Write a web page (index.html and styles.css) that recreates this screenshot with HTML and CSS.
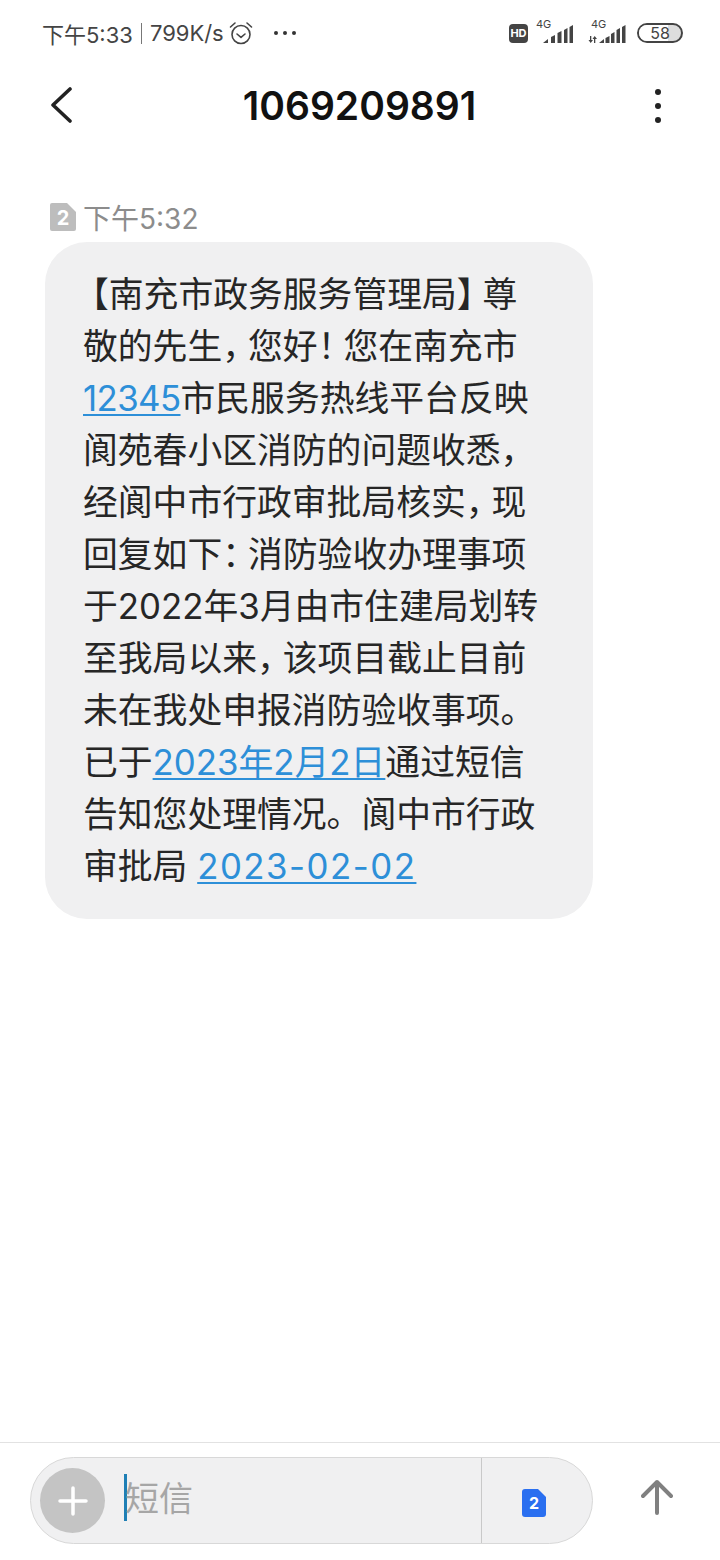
FILE: index.html
```html
<!DOCTYPE html>
<html lang="zh">
<head>
<meta charset="utf-8">
<title>1069209891</title>
<link rel="stylesheet" href="styles.css">
</head>
<body>
<div class="page">
  <!-- status bar -->
  <div class="status">
    <div class="status-left">
      <span>下午5:33</span>
      <span class="divider"></span>
      <span>799K/s</span>
      <svg class="alarm" width="24" height="24" viewBox="0 0 24 24" fill="none" stroke="#444" stroke-width="1.6" stroke-linecap="round" stroke-linejoin="round">
        <circle cx="12" cy="13.5" r="9"/>
        <path d="M8 13l4 3.4 4-3.4"/>
        <path d="M1.500 6L6 2M22.500 6L18 2"/>
      </svg>
      <span class="dots"><i></i><i></i><i></i></span>
    </div>
    <div class="status-right">
      <span class="hd">HD</span>
      <span class="signal">
        <span class="net">4G</span>
        <svg width="30" height="20" viewBox="0 0 30 20" fill="#444">
          <path d="M0 19l5-4v4zM8 13l4-2v8H8zM14.500 9l4-2v12h-4zM21 6l3.500-2v15H21zM26.500 3L30 1v18h-3.500z"/>
        </svg>
      </span>
      <span class="signal second">
        <span class="net">4G</span>
        <svg width="38" height="20" viewBox="0 0 38 20" fill="#444">
          <path d="M2 12h1.300v4H5l-2.300 3L.5 16H2zM6 19h1.300v-4H9l-2.300-3L4.500 15H6z"/>
          <path d="M11 19l5-4v4zM17.500 14l4-2v7h-4zM23 10l3.500-2v11H23zM28.500 6L32 4v15h-3.500zM34 3l3.500-2v18H34z"/>
        </svg>
      </span>
      <span class="battery"><span class="battery-fill"></span><span class="battery-num">58</span></span>
    </div>
  </div>

  <!-- title bar -->
  <div class="titlebar">
    <svg class="back" width="24" height="36" viewBox="0 0 24 36" fill="none" stroke="#222" stroke-width="3.600" stroke-linecap="round" stroke-linejoin="round">
      <path d="M20 2L3 18l17 16"/>
    </svg>
    <h1 class="number">1069209891</h1>
    <span class="more"><i></i><i></i><i></i></span>
  </div>

  <!-- messages -->
  <div class="thread">
    <div class="msg-time">
      <svg class="sim" width="26" height="28" viewBox="0 0 26 28">
        <path d="M2 0h15l9 9v17a2 2 0 0 1-2 2H2a2 2 0 0 1-2-2V2a2 2 0 0 1 2-2z" fill="#bdbdbd"/>
        <text x="13" y="22" text-anchor="middle" class="sim-num">2</text>
      </svg>
      <span>下午5:32</span>
    </div>
    <div class="bubble">
      <span class="open">【</span>南充市政务服务管理局<span class="punct">】</span>尊<br>
      敬的先生<span class="punct">，</span>您好<span class="punct">！</span>您在南充市<br>
      <a class="link tight">12345</a>市民服务热线平台反映<br>
      阆苑春小区消防的问题收悉<span class="punct">，</span><br>
      经阆中市行政审批局核实<span class="punct">，</span>现<br>
      回复如下<span class="punct">：</span>消防验收办理事项<br>
      于2022年3月由市住建局划转<br>
      至我局以来<span class="punct">，</span>该项目截止目前<br>
      未在我处申报消防验收事项。<br>
      已于<a class="link">2023年2月2日</a>通过短信<br>
      告知您处理情况。阆中市行政<br>
      审批局 <a class="link wide">2023-02-02</a>
    </div>
  </div>

  <!-- input bar -->
  <div class="composer">
    <div class="input">
      <span class="add">
        <svg width="30" height="30" viewBox="0 0 30 30" stroke="#fff" stroke-width="3.500" stroke-linecap="round">
          <path d="M15 2v26M2 15h26"/>
        </svg>
      </span>
      <span class="caret"></span>
      <span class="placeholder">短信</span>
      <span class="sim-pick">
        <svg width="24" height="28" viewBox="0 0 24 28">
          <path d="M3 0h13l8 8v17a3 3 0 0 1-3 3H3a3 3 0 0 1-3-3V3a3 3 0 0 1 3-3z" fill="#2a6ff0"/>
          <text x="12" y="20" text-anchor="middle" class="sim-num small">2</text>
        </svg>
      </span>
    </div>
    <svg class="send" width="32" height="36" viewBox="0 0 32 36" fill="none" stroke="#808080" stroke-width="4" stroke-linecap="round" stroke-linejoin="round">
      <path d="M16 34V3M2 17L16 3l14 14"/>
    </svg>
  </div>
</div>
</body>
</html>
```

FILE: styles.css
```css
* {
  box-sizing: border-box;
}

body {
  margin: 0;
  background-color: #fff;
  font-family: "Inter", "Noto Sans CJK SC", sans-serif;
  color: #222;
}

.page {
  width: 720px;
  height: 1560px;
  display: flex;
  flex-direction: column;
}

/* status bar */
.status {
  height: 66px;
  padding: 0 37px 0 42px;
  display: flex;
  justify-content: space-between;
  align-items: center;
  color: #444;
  font-size: 22px;
}

.status-left {
  display: flex;
  align-items: center;
}

.divider {
  width: 1px;
  height: 21px;
  margin: 0 8px;
  background-color: #777;
}

.alarm {
  margin-left: 5px;
}

.dots {
  display: flex;
  gap: 5px;
  margin-left: 21px;
}

.dots i {
  width: 4px;
  height: 4px;
  background-color: #333;
  border-radius: 50%;
}

.status-right {
  display: flex;
  align-items: center;
}

.hd {
  width: 19px;
  height: 19px;
  margin-top: 1px;
  border-radius: 4px;
  background-color: #444;
  color: #fff;
  font-size: 11px;
  font-weight: 700;
  line-height: 19px;
  text-align: center;
}

.signal {
  position: relative;
  display: flex;
  margin-left: 15px;
  padding-top: 2px;
}

.signal.second {
  margin-left: 15px;
}

.net {
  position: absolute;
  left: -7px;
  top: -4px;
  font-size: 11px;
  line-height: 13px;
}

.signal.second .net {
  left: 3px;
}

.battery {
  position: relative;
  width: 46px;
  height: 20px;
  margin-left: 11px;
  border: 2px solid #444;
  border-radius: 10px;
  overflow: hidden;
  text-align: center;
  background-color: #ddd;
}

.battery-fill {
  position: absolute;
  left: 0;
  top: 0;
  bottom: 0;
  width: 70%;
  background-color: #fff;
}

.battery-num {
  position: relative;
  font-size: 16px;
  line-height: 16px;
  display: block;
}

/* title bar */
.titlebar {
  height: 78px;
  padding: 0 59px 0 50px;
  display: flex;
  align-items: center;
  justify-content: space-between;
}

.number {
  margin: 0 7px 0 -3px;
  font-size: 39px;
  font-weight: 600;
  color: #111;
}

.more {
  display: flex;
  flex-direction: column;
  gap: 8px;
  margin-top: 2px;
}

.more i {
  width: 6px;
  height: 6px;
  background-color: #222;
  border-radius: 50%;
}

/* thread */
.thread {
  flex: 1;
  padding: 58px 0 0 45px;
}

.msg-time {
  display: flex;
  align-items: center;
  gap: 7px;
  height: 30px;
  padding-left: 5px;
  margin-bottom: 10px;
  font-size: 28px;
  color: #8c8c8c;
}

.sim-num {
  font-size: 20px;
  font-weight: 700;
  fill: #fff;
}

.sim-num.small {
  font-size: 16px;
}

.bubble {
  width: 548px;
  height: 677px;
  padding: 26px 0 0 38px;
  background-color: #f0f0f1;
  border-radius: 42px;
  font-size: 34.800px;
  line-height: 52px;
  color: #262626;
  white-space: nowrap;
}

.open {
  margin-left: -9px;
}

.punct {
  letter-spacing: -9px;
}

.link {
  color: #2d8fd8;
  text-decoration: underline;
  text-decoration-thickness: 2px;
  text-underline-offset: 3px;
}

.link.tight {
  letter-spacing: -0.6px;
}

.link.wide {
  letter-spacing: 1.500px;
}

/* composer */
.composer {
  height: 118px;
  padding: 14px 47px 0 30px;
  border-top: 1px solid #e2e2e2;
  display: flex;
  align-items: flex-start;
  justify-content: space-between;
}

.input {
  width: 563px;
  height: 87px;
  padding-left: 9px;
  display: flex;
  align-items: center;
  background-color: #f0f0f1;
  border: 1px solid #d8d8d8;
  border-radius: 44px;
}

.add {
  width: 65px;
  height: 65px;
  border-radius: 50%;
  background-color: #c4c4c4;
  display: flex;
  align-items: center;
  justify-content: center;
}

.caret {
  width: 3px;
  height: 47px;
  margin: -6px 0 0 19px;
  background-color: #1f7fb5;
}

.placeholder {
  margin: -9px 0 0 -2px;
  font-size: 34px;
  color: #a6a6a6;
}

.sim-pick {
  margin-left: auto;
  width: 111px;
  height: 100%;
  border-left: 1px solid #c9c9c9;
  display: flex;
  align-items: center;
  padding: 5px 0 0 40px;
}

.send {
  margin-top: 22px;
}
```
